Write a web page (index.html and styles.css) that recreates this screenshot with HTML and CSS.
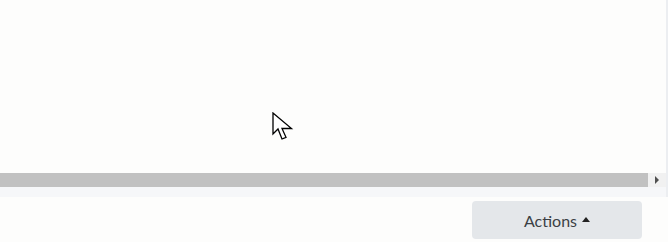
FILE: index.html
```html
<!DOCTYPE html>
<html>
<head>
<meta charset="utf-8">
<link rel="stylesheet" href="styles.css">
</head>
<body>
<div class="page">
  <div class="panel">
    <div class="content">
      <svg class="cursor" width="22" height="30" viewBox="0 0 22 30">
        <path d="M1 1 L1 22 L6 17 L10 27 L14 25.3 L10 16.5 L19.5 16.5 Z" fill="#fff" stroke="#000" stroke-width="1.3" stroke-linejoin="miter"/>
      </svg>
    </div>
    <div class="scrollbar">
      <div class="thumb"></div>
      <div class="arrow"><span class="tri"></span></div>
    </div>
    <div class="strip"></div>
  </div>
  <div class="footer">
    <button class="btn">Actions <span class="caret"></span></button>
  </div>
</div>
</body>
</html>
```
FILE: styles.css
```css
html, body {
  margin: 0;
  padding: 0;
  background: #fdfdfc;
}
.page {
  width: 668px;
  height: 242px;
  display: flex;
  flex-direction: column;
  overflow: hidden;
}
.panel {
  width: 666px;
  border-right: 2px solid #eceef1;
  display: flex;
  flex-direction: column;
}
.content {
  height: 173px;
  background: #fdfdfc;
  position: relative;
}
.cursor {
  position: absolute;
  left: 272px;
  top: 112px;
}
.scrollbar {
  height: 14px;
  display: flex;
}
.thumb {
  flex: 1;
  background: #c1c1c1;
}
.arrow {
  width: 18px;
  background: #f1f1f1;
  display: flex;
  align-items: center;
  justify-content: center;
}
.tri {
  width: 0;
  height: 0;
  border-top: 4px solid transparent;
  border-bottom: 4px solid transparent;
  border-left: 4px solid #505050;
}
.strip {
  height: 10px;
  background: #f6f7f9;
}
.footer {
  flex: 1;
  display: flex;
  justify-content: flex-end;
  align-items: flex-start;
  padding: 4px 26px 0 0;
  background: #fdfdfc;
}
.btn {
  width: 170px;
  height: 38px;
  border: none;
  border-radius: 4px;
  background: #e4e7ea;
  font-family: Lato, "Open Sans", sans-serif;
  font-size: 16px;
  color: #3b3f44;
  display: flex;
  align-items: center;
  justify-content: center;
  gap: 5px;
  padding: 0;
}
.caret {
  width: 0;
  height: 0;
  border-left: 4.5px solid transparent;
  border-right: 4.5px solid transparent;
  border-bottom: 5px solid #222;
  margin-bottom: 2px;
}
```
